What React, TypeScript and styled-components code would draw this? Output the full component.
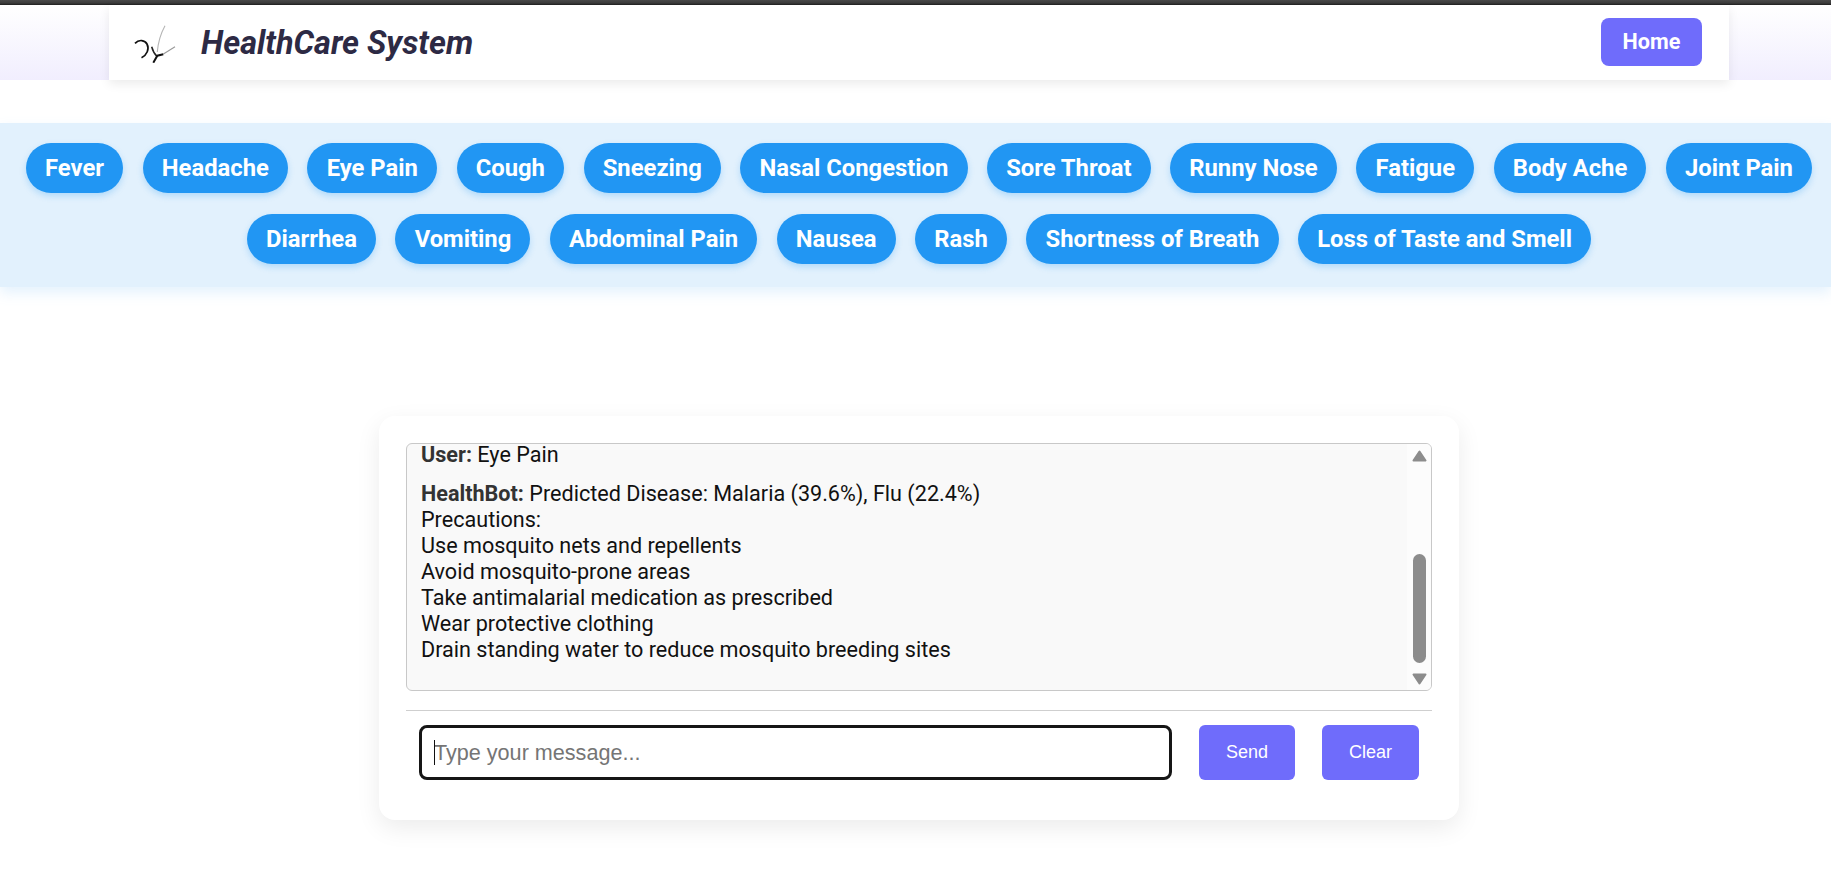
import { createGlobalStyle } from 'styled-components';
import styled from 'styled-components';

const GlobalStyle = createGlobalStyle`
  html, body {
    margin: 0;
    padding: 0;
    background: #fff;
    overflow: hidden;
  }
  * {
    box-sizing: border-box;
  }
  body {
    font-family: Roboto, "Liberation Sans", sans-serif;
  }
`;

const Page = styled.div`
  width: 100%;
  height: 883px;
  display: flex;
  flex-direction: column;
  background: #fff;
`;

const TopEdge = styled.div`
  height: 5px;
  background: linear-gradient(180deg, #4a4a4a 0%, #3c3c3c 60%, #1e1e1e 100%);
`;

const HeaderBand = styled.header`
  height: 75px;
  padding: 0 102px 0 109px;
  background: linear-gradient(180deg, #ffffff 0%, #f1eefe 100%);
`;

const Navbar = styled.nav`
  height: 75px;
  padding: 0 27px 0 24px;
  display: flex;
  align-items: center;
  justify-content: space-between;
  background: #fff;
  box-shadow: 0 4px 10px rgba(0, 0, 0, 0.08);
`;

const Brand = styled.div`
  display: flex;
  align-items: center;
  gap: 24px;
`;

const BrandName = styled.h1`
  margin: 0;
  font-size: 32.4px;
  font-weight: 700;
  font-style: italic;
  color: #2d2a44;
`;

const HomeButton = styled.button`
  width: 101px;
  height: 48px;
  margin-bottom: 2px;
  border: none;
  border-radius: 8px;
  background: #6f6cfb;
  color: #fff;
  font-family: Roboto, sans-serif;
  font-size: 21.6px;
  font-weight: 700;
`;

const SymptomBand = styled.section`
  margin-top: 43px;
  padding: 20px 9px 23px 16px;
  display: flex;
  flex-wrap: wrap;
  justify-content: center;
  gap: 21px 19.4px;
  background: #e2f1fd;
  box-shadow: 0 6px 12px rgba(226, 241, 253, 0.9);
`;

const SymptomPill = styled.button`
  height: 50px;
  padding: 0 19.2px;
  border: none;
  border-radius: 25px;
  background: #2196f3;
  color: #fff;
  font-family: Roboto, sans-serif;
  font-size: 23.8px;
  font-weight: 700;
  box-shadow: 0 3px 6px rgba(33, 150, 243, 0.25);
`;

const ChatCard = styled.main`
  width: 1080px;
  height: 404px;
  margin: 129px 0 0 379px;
  padding: 27px;
  display: flex;
  flex-direction: column;
  border-radius: 16px;
  background: #fff;
  box-shadow: 0 8px 24px rgba(0, 0, 0, 0.08);
`;

const ChatBox = styled.div`
  height: 248px;
  display: flex;
  border: 1px solid #c8c8c8;
  border-radius: 6px;
  overflow: hidden;
  background: #f9f9f9;
`;

const MessageList = styled.div`
  flex: 1;
  margin-top: -2px;
  padding: 0 14px;
  font-size: 21.6px;
  line-height: 26px;
  color: #111;
`;

const Message = styled.p`
  margin: 0 0 13px;

  strong {
    color: #333;
    font-weight: 700;
  }
`;

const ScrollRail = styled.div`
  width: 24px;
  padding: 6px 3px 5px 3px;
  display: flex;
  flex-direction: column;
  align-items: center;
  background: #fcfcfc;
`;

const ScrollThumb = styled.div`
  width: 13px;
  height: 109px;
  margin-top: auto;
  margin-bottom: 10px;
  border-radius: 7px;
  background: #8c8c8c;
`;

const Divider = styled.hr`
  width: 100%;
  margin: 19px 0 14px;
  border: none;
  border-top: 1px solid #cfcfcf;
`;

const Composer = styled.form`
  padding: 0 13px;
  display: flex;
  align-items: stretch;
  gap: 27px;
`;

const InputWrap = styled.div`
  flex: 1;
  position: relative;
`;

const MessageInput = styled.input`
  width: 100%;
  height: 55px;
  padding: 0 12px;
  border: 3px solid #161616;
  border-radius: 8px;
  outline: none;
  background: #fff;
  font-family: "Liberation Sans", Arial, sans-serif;
  font-size: 21.6px;
  color: #111;

  &::placeholder {
    color: #757575;
  }
`;

const Caret = styled.span`
  position: absolute;
  left: 15px;
  top: 15px;
  width: 1px;
  height: 25px;
  background: #111;
`;

const ActionButton = styled.button<{ $width: number }>`
  width: ${(p) => p.$width}px;
  height: 55px;
  border: none;
  border-radius: 6px;
  background: #6f6cfb;
  color: #fff;
  font-family: "Liberation Sans", Arial, sans-serif;
  font-size: 18px;
`;

const symptoms = [
  'Fever',
  'Headache',
  'Eye Pain',
  'Cough',
  'Sneezing',
  'Nasal Congestion',
  'Sore Throat',
  'Runny Nose',
  'Fatigue',
  'Body Ache',
  'Joint Pain',
  'Diarrhea',
  'Vomiting',
  'Abdominal Pain',
  'Nausea',
  'Rash',
  'Shortness of Breath',
  'Loss of Taste and Smell',
];

const precautions = [
  'Precautions:',
  'Use mosquito nets and repellents',
  'Avoid mosquito-prone areas',
  'Take antimalarial medication as prescribed',
  'Wear protective clothing',
  'Drain standing water to reduce mosquito breeding sites',
];

const Logo = () => (
  <svg width="44" height="40" viewBox="0 0 44 40" fill="none">
    <path d="M2 20.3 C6 16 12 17 14 21 C16.5 26 14 32 8.5 34.7" stroke="#111" strokeWidth="1.7" />
    <path d="M18.7 23.7 C19.5 27 21.5 31 24.3 33.7" stroke="#222" strokeWidth="1.5" />
    <path d="M20.3 39.7 L24.3 32.7 L30.3 31.3" stroke="#111" strokeWidth="2" />
    <path d="M30 31.3 L42 23.7" stroke="#999" strokeWidth="1.1" />
    <path d="M24.3 29 C25 20 28 10 32 2.7" stroke="#b5b5b5" strokeWidth="1.1" />
  </svg>
);

const Arrow = ({ down }: { down?: boolean }) => (
  <svg width="15" height="12" viewBox="0 0 15 12">
    <path
      d={down ? 'M1.5 1.5 H13.5 L7.5 10.5 Z' : 'M7.5 1.5 L13.5 10.5 H1.5 Z'}
      fill="#8c8c8c"
      stroke="#8c8c8c"
      strokeWidth="2"
      strokeLinejoin="round"
    />
  </svg>
);

export default function App() {
  return (
    <Page>
      <GlobalStyle />
      <TopEdge />
      <HeaderBand>
        <Navbar>
          <Brand>
            <Logo />
            <BrandName>HealthCare System</BrandName>
          </Brand>
          <HomeButton>Home</HomeButton>
        </Navbar>
      </HeaderBand>

      <SymptomBand>
        {symptoms.map((name) => (
          <SymptomPill key={name}>{name}</SymptomPill>
        ))}
      </SymptomBand>

      <ChatCard>
        <ChatBox>
          <MessageList>
            <Message>
              <strong>User:</strong> Eye Pain
            </Message>
            <Message>
              <strong>HealthBot:</strong> Predicted Disease: Malaria (39.6%), Flu (22.4%)
              {precautions.map((line) => (
                <span key={line}>
                  <br />
                  {line}
                </span>
              ))}
            </Message>
          </MessageList>
          <ScrollRail>
            <Arrow />
            <ScrollThumb />
            <Arrow down />
          </ScrollRail>
        </ChatBox>
        <Divider />
        <Composer onSubmit={(e) => e.preventDefault()}>
          <InputWrap>
            <MessageInput placeholder="Type your message..." />
            <Caret />
          </InputWrap>
          <ActionButton $width={96}>Send</ActionButton>
          <ActionButton $width={97}>Clear</ActionButton>
        </Composer>
      </ChatCard>
    </Page>
  );
}
